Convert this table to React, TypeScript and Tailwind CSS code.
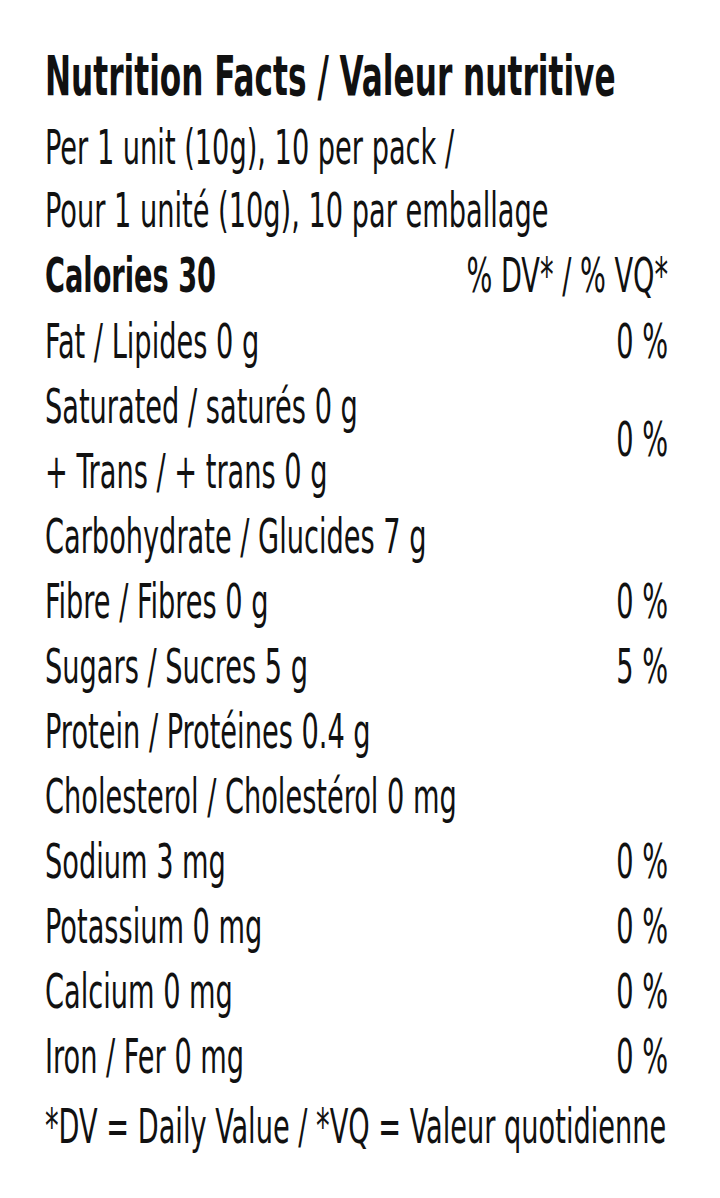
import React from "react";

type Row = { label: string; dv?: string };

const rows: Row[] = [
  { label: "Carbohydrate / Glucides 7 g" },
  { label: "Fibre / Fibres 0 g", dv: "0 %" },
  { label: "Sugars / Sucres 5 g", dv: "5 %" },
  { label: "Protein / Protéines 0.4 g" },
  { label: "Cholesterol / Cholestérol 0 mg" },
  { label: "Sodium 3 mg", dv: "0 %" },
  { label: "Potassium 0 mg", dv: "0 %" },
  { label: "Calcium 0 mg", dv: "0 %" },
  { label: "Iron / Fer 0 mg", dv: "0 %" },
];

const font = {
  fontFamily: '"DejaVu Sans Condensed", "DejaVu Sans", "Liberation Sans", sans-serif',
};

/** Condensed nutrition label: the face is narrowed with a horizontal scale. */
export default function App() {
  return (
    <div className="min-h-[1198px] w-[720px] overflow-hidden bg-white text-[#111] pl-[45px] pt-[44px]">
      <div className="w-[989px] origin-left scale-x-[0.63] whitespace-nowrap" style={font}>
        <h1 className="text-[55px] leading-[64px] font-bold">
          Nutrition Facts / Valeur nutritive
        </h1>
        <div className="text-[48px] leading-[63px] mt-[8px]">
          <p>Per 1 unit (10g), 10 per pack /</p>
          <p>Pour 1 unité (10g), 10 par emballage</p>
        </div>
        <div className="flex items-center justify-between h-[67px] text-[48px] leading-[65px]">
          <span className="font-bold">Calories 30</span>
          <span>% DV* / % VQ*</span>
        </div>
        <div className="text-[48px] leading-[65px]">
          <div className="flex items-center justify-between h-[65px]">
            <span>Fat / Lipides 0 g</span>
            <span>0 %</span>
          </div>
          <div className="flex items-center justify-between">
            <div className="flex flex-col">
              <span className="h-[65px]">Saturated / saturés 0 g</span>
              <span className="h-[65px]">+ Trans / + trans 0 g</span>
            </div>
            <span>0 %</span>
          </div>
          {rows.map((r) => (
            <div key={r.label} className="flex items-center justify-between h-[65px]">
              <span>{r.label}</span>
              {r.dv && <span>{r.dv}</span>}
            </div>
          ))}
        </div>
        <p className="text-[48px] leading-[65px] mt-[5px]">
          *DV = Daily Value / *VQ = Valeur quotidienne
        </p>
      </div>
    </div>
  );
}
